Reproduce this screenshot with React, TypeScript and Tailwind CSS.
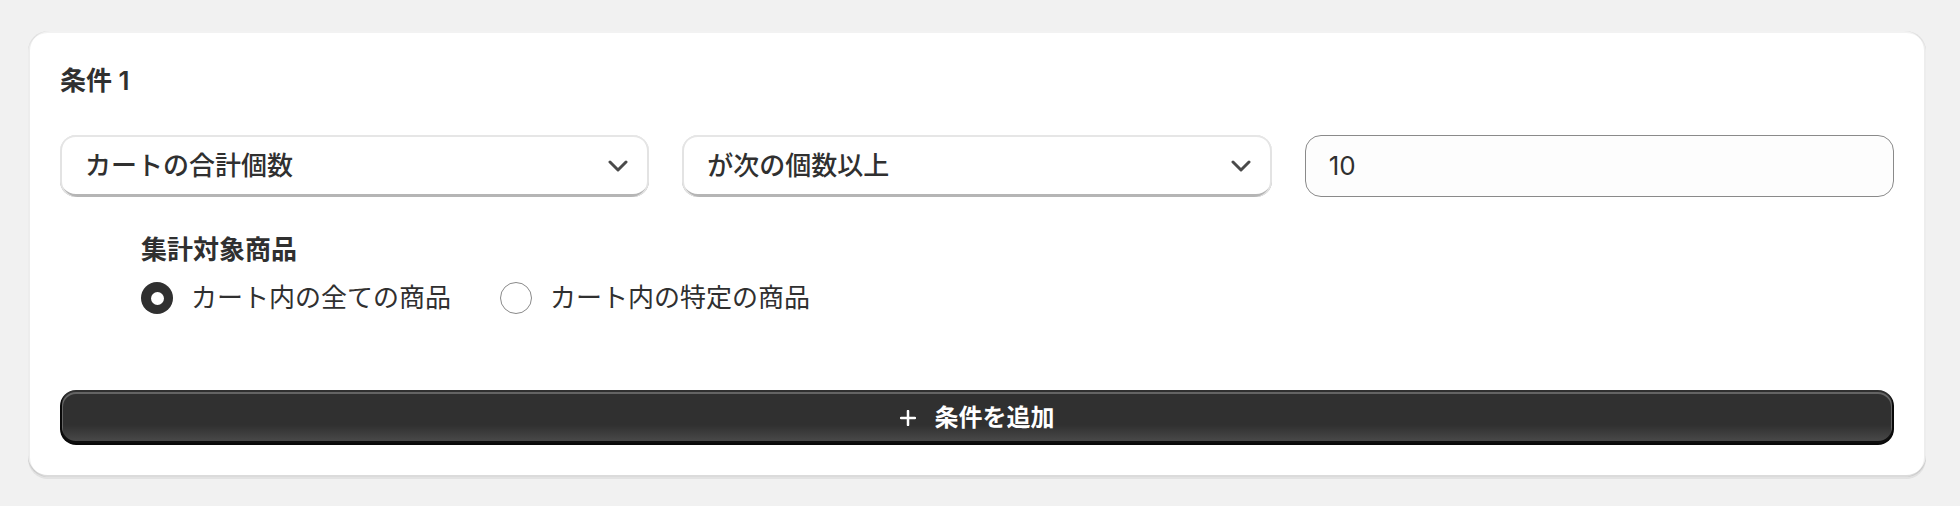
const font = "font-['Inter','Noto_Sans_CJK_JP',sans-serif]";

function Chevron() {
  return (
    <svg width="20" height="12" viewBox="0 0 20 12" fill="none" className="shrink-0">
      <path d="M2 2l8 8 8-8" stroke="#4a4a4a" strokeWidth="3" strokeLinecap="round" strokeLinejoin="round" />
    </svg>
  );
}

function SelectBox({ label }: { label: string }) {
  return (
    <div className="flex h-[62px] items-center justify-between rounded-[16px] bg-white pl-[25px] pr-[21px] shadow-[inset_0_2px_0_0_#e6e6e6,inset_2px_0_0_0_#e3e3e3,inset_-2px_0_0_0_#e3e3e3,inset_0_-3px_0_0_#b5b5b5]">
      <span className="text-[26px] font-medium leading-[34px] text-[#303030]">{label}</span>
      <Chevron />
    </div>
  );
}

function Radio({ checked, label }: { checked?: boolean; label: string }) {
  return (
    <label className="flex items-center gap-[18px]">
      {checked ? (
        <span className="flex h-[32px] w-[32px] items-center justify-center rounded-full bg-[#303030]">
          <span className="h-[13px] w-[13px] rounded-full bg-white" />
        </span>
      ) : (
        <span className="h-[32px] w-[32px] rounded-full border-[1.5px] border-[#8a8a8a] bg-white" />
      )}
      <span className="text-[26px] font-normal leading-[34px] text-[#303030]">{label}</span>
    </label>
  );
}

export default function App() {
  return (
    <div className={`${font} min-h-[506px] bg-[#f1f1f1] pl-[28px] pt-[31px]`}>
      <div className="w-[1898px] rounded-[20px] bg-white px-[32px] pb-[32px] pt-[33px] shadow-[0_2px_0_0_rgba(26,26,26,0.07),inset_2px_0_0_0_rgba(0,0,0,0.07),inset_-2px_0_0_0_rgba(0,0,0,0.07),inset_0_-2px_0_0_rgba(0,0,0,0.14),inset_0_2px_0_0_rgba(0,0,0,0.05)]">
        <h2 className="text-[26px] font-semibold leading-[34px] text-[#303030]">条件 1</h2>

        <div className="mt-[37px] grid grid-cols-3 gap-[33px]">
          <SelectBox label="カートの合計個数" />
          <SelectBox label="が次の個数以上" />
          <div className="flex h-[62px] items-center rounded-[16px] border-[1.5px] border-[#8a8a8a] bg-[#fdfdfd] px-[23px]">
            <span className="text-[26px] leading-[34px] text-[#303030]">10</span>
          </div>
        </div>

        <div className="ml-[81px] mt-[36px]">
          <div className="text-[26px] font-semibold leading-[34px] text-[#303030]">集計対象商品</div>
          <div className="mt-[14px] flex items-center gap-[49px]">
            <Radio checked label="カート内の全ての商品" />
            <Radio label="カート内の特定の商品" />
          </div>
        </div>

        <button className="mt-[75px] flex h-[55px] w-full items-center justify-center gap-[19px] rounded-[16px] bg-[#303030] bg-[linear-gradient(180deg,rgba(48,48,48,0)_63.53%,rgba(255,255,255,0.15))] text-white shadow-[inset_0_-2px_0_2px_rgba(0,0,0,0.8),inset_0_0_0_2px_#303030,inset_0_1px_0_3px_rgba(255,255,255,0.25)]">
          <svg width="16" height="16" viewBox="0 0 16 16" fill="none">
            <path d="M8 1v14M1 8h14" stroke="white" strokeWidth="2.5" strokeLinecap="round" />
          </svg>
          <span className="text-[24px] font-semibold leading-[30px]">条件を追加</span>
        </button>
      </div>
    </div>
  );
}
